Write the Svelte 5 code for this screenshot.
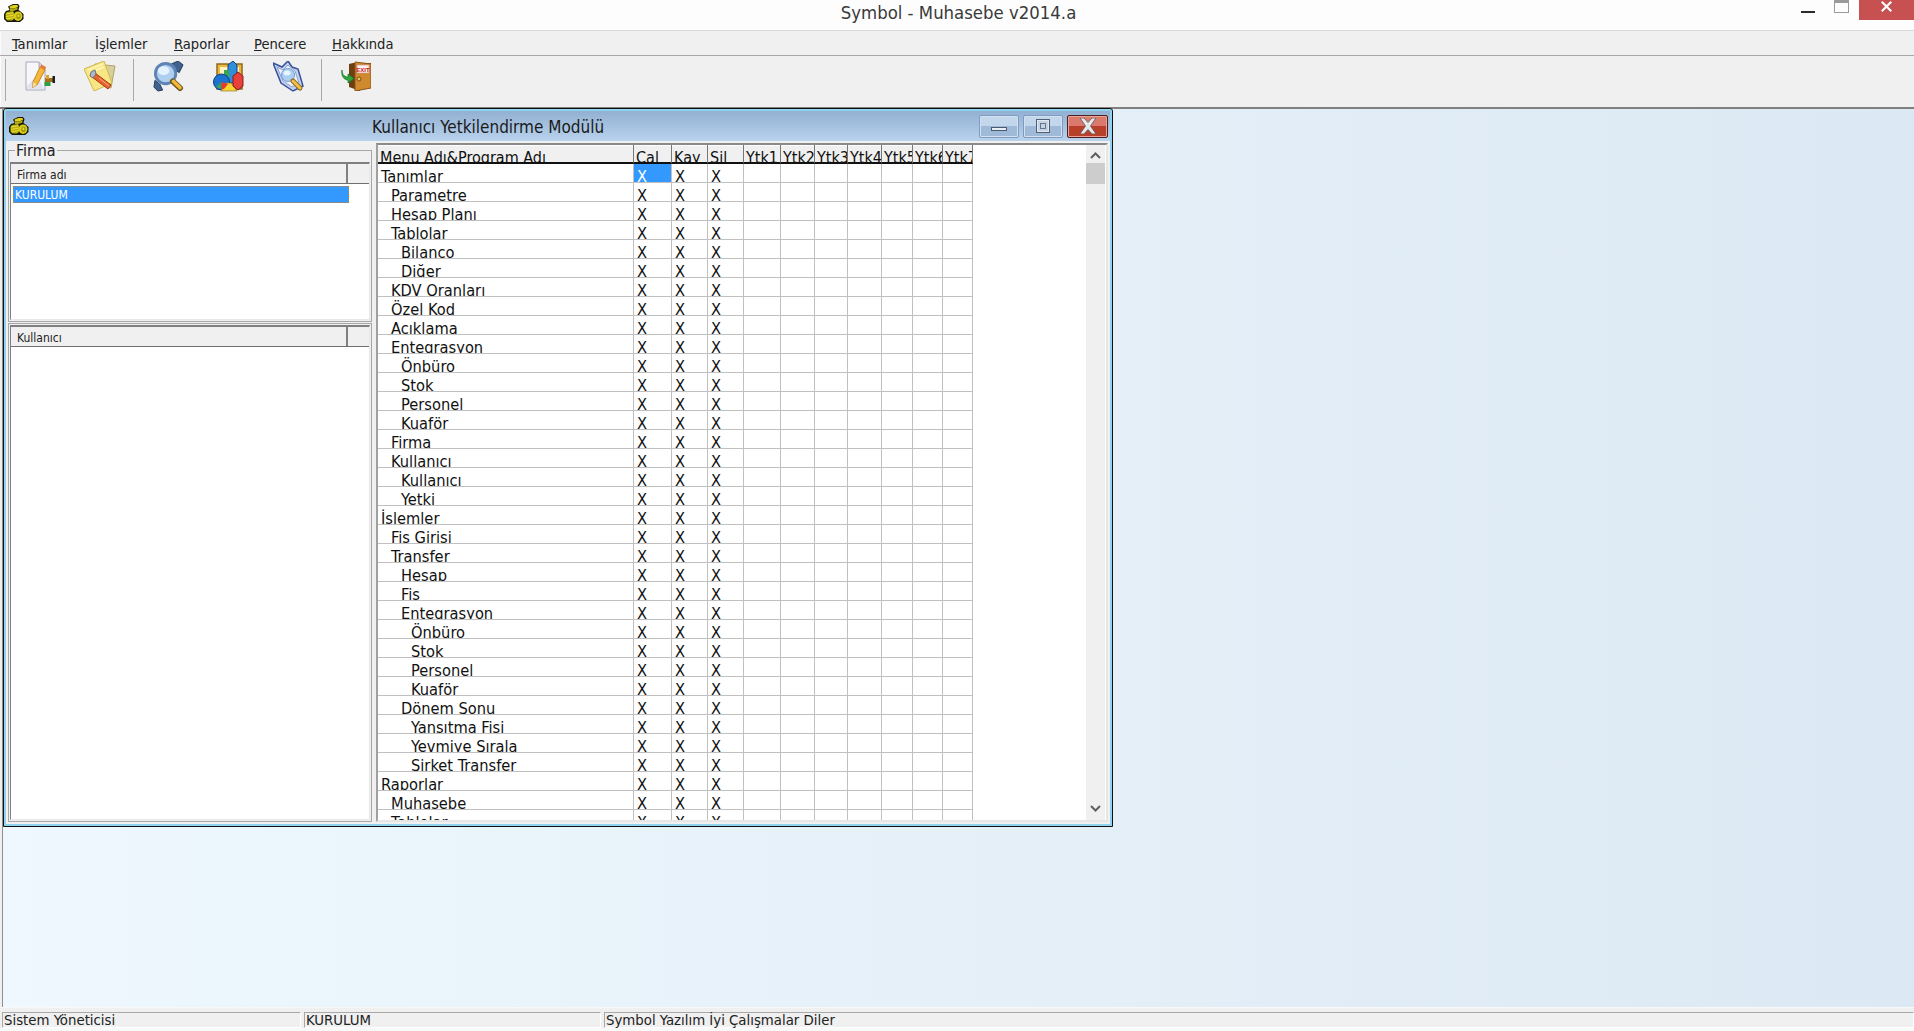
<script>
  const menus = [
    { pre: '', key: 'T', post: 'anımlar' },
    { pre: 'İ', key: 'ş', post: 'lemler' },
    { pre: '', key: 'R', post: 'aporlar' },
    { pre: '', key: 'P', post: 'encere' },
    { pre: '', key: 'H', post: 'akkında' }
  ];

  const columns = ['Çal', 'Kay', 'Sil', 'Ytk1', 'Ytk2', 'Ytk3', 'Ytk4', 'Ytk5', 'Ytk6', 'Ytk7'];
  const widths = [38, 36, 36, 37, 34, 33, 34, 31, 30, 30];

  const rows = [
    ['Tanımlar', 0], ['Parametre', 1], ['Hesap Planı', 1], ['Tablolar', 1], ['Bilanço', 2], ['Diğer', 2],
    ['KDV Oranları', 1], ['Özel Kod', 1], ['Açıklama', 1], ['Entegrasyon', 1], ['Önbüro', 2], ['Stok', 2],
    ['Personel', 2], ['Kuaför', 2], ['Firma', 1], ['Kullanıcı', 1], ['Kullanıcı', 2], ['Yetki', 2],
    ['İşlemler', 0], ['Fiş Girişi', 1], ['Transfer', 1], ['Hesap', 2], ['Fiş', 2], ['Entegrasyon', 2],
    ['Önbüro', 3], ['Stok', 3], ['Personel', 3], ['Kuaför', 3], ['Dönem Sonu', 2], ['Yansıtma Fişi', 3],
    ['Yevmiye Sırala', 3], ['Şirket Transfer', 3], ['Raporlar', 0], ['Muhasebe', 1], ['Tablolar', 1]
  ];
</script>

{#snippet coins()}
  <svg class="coins" viewBox="0 0 20 18" width="20" height="18">
    <path d="M4 2.5 L9 0 H14 L15.5 2 L14.5 6 L16 7 L19.5 10 L19.5 15 L16 18 H3 L0 15 V10 L2 7 L5.5 6Z" fill="#17170a" />
    <path d="M5.5 2.5 L9.5 1 H13.5 L14 3 L10 4.5 H6Z" fill="#e0d21a" />
    <path d="M5.5 4.5 H10 L13.5 3.5 L13.5 5.5 L9.5 7 H6Z" fill="#b0a812" />
    <path d="M1.5 10 L3 8 L9 7 L10 9 L10 15 L8 16.5 H3.5 L1.5 14.5Z" fill="#b8b016" />
    <path d="M2 10 L9 8.8 M2 12.5 L9.5 11.2 M2.5 14.8 L9.5 13.6" stroke="#ebe02c" stroke-width="1" />
    <ellipse cx="14" cy="12.2" rx="4.4" ry="4.8" fill="#d8cc18" />
    <ellipse cx="14.4" cy="12.2" rx="2.2" ry="2.8" fill="#a09810" />
    <ellipse cx="14.4" cy="11.8" rx="1" ry="1.4" fill="#e8de30" />
  </svg>
{/snippet}

<div class="app">
  <header class="titlebar">
    <div class="title-left">{@render coins()}</div>
    <div class="app-title">Symbol - Muhasebe v2014.a</div>
    <div class="caption">
      <span class="cap-min"></span>
      <span class="cap-max"></span>
      <span class="cap-close">
        <svg viewBox="0 0 11 11" width="11" height="11"><path d="M1.5 0 L5.5 4 L9.5 0 L11 1.5 L7 5.5 L11 9.5 L9.5 11 L5.5 7 L1.5 11 L0 9.5 L4 5.5 L0 1.5Z" fill="#fff" /></svg>
      </span>
    </div>
  </header>

  <nav class="menubar">
    {#each menus as m}
      <span class="menu-item">{m.pre}<u>{m.key}</u>{m.post}</span>
    {/each}
  </nav>

  <div class="toolbar">
    <span class="sep first"></span>
    <button class="tool" aria-label="Yeni">
      <svg viewBox="0 0 30 30" width="30" height="30">
        <path d="M1 1 H14 L20 7 V29 H1Z" fill="#f6f6fb" stroke="#a6a8bc" />
        <path d="M14 1 V7 H20" fill="#cfd2e2" stroke="#a6a8bc" />
        <path d="M2 25 L12 14 L19 28 H2Z" fill="#e2e3ee" />
        <path d="M8 21 L15 6 L20 9 L12 24 L7.5 26.5Z" fill="#f5b83a" stroke="#c48a20" />
        <path d="M15 6 L16.5 3.5 L21 6 L20 9Z" fill="#e87a3a" />
        <path d="M7.5 26.5 L8 21 L12 24Z" fill="#f4dcb0" />
        <rect x="20" y="17" width="8" height="4" fill="#a8701c" />
        <rect x="21" y="14" width="3" height="4" fill="#e0a030" />
        <rect x="27.5" y="15" width="2.5" height="7" fill="#1d1d1d" />
        <rect x="19.5" y="21" width="6" height="4" fill="#2f9e44" />
      </svg>
    </button>
    <button class="tool" aria-label="Ayarlar">
      <svg viewBox="0 0 32 30" width="32" height="30">
        <path d="M11 3 L31 5 L27 27 L10 23Z" fill="#d8cf9c" stroke="#b0a468" />
        <path d="M0 8 L20 0 L28 22 L10 30Z" fill="#f8e684" stroke="#cdb84a" />
        <path d="M4 9 L19 3 M5 12 L20 6" stroke="#fff6bc" stroke-width="1.4" />
        <path d="M11 12 L27 24 L24 28 L8 16Z" fill="#e8622c" stroke="#a83c18" />
        <path d="M6 15 L7 11 L11 9 L12 13 L9 17Z" fill="#b3b8c6" stroke="#6a6f80" />
        <path d="M15 17 L25 25" stroke="#f8ac8a" />
      </svg>
    </button>
    <span class="sep"></span>
    <button class="tool" aria-label="Ara">
      <svg viewBox="0 0 32 32" width="31" height="31">
        <path d="M19 3 L26 0 L31 4 L27 12 L23 9Z" fill="#40628e" stroke="#20385c" />
        <path d="M2 20 L7 24 L10 30 L5 31 L1 27Z" fill="#40628e" stroke="#20385c" />
        <circle cx="13" cy="13" r="10.5" fill="#aecff0" stroke="#5f83b5" stroke-width="3" />
        <ellipse cx="11" cy="10" rx="6" ry="4.5" fill="#e4f2fd" />
        <path d="M20.5 21 L28 28" stroke="#6f5a22" stroke-width="6" stroke-linecap="round" />
        <path d="M21 21 L28 27.5" stroke="#f4b93b" stroke-width="3.5" stroke-linecap="round" />
      </svg>
    </button>
    <button class="tool" aria-label="Grafik">
      <svg viewBox="0 0 31 31" width="31" height="31">
        <rect x="4" y="3" width="25" height="25" fill="#f2b83c" stroke="#8c6a1e" stroke-width="1.5" />
        <rect x="7" y="6" width="19" height="18" fill="#fff4c4" />
        <path d="M15 4 L20 0 L24 4 V22 H15Z" fill="#2f8fdc" stroke="#123c80" />
        <path d="M11 9 H16 V22 H11Z" fill="#38a84a" />
        <circle cx="8.5" cy="21" r="8" fill="#1c74d0" stroke="#123c80" />
        <path d="M8 30 L13 22 H18 L24 30Z" fill="#f6d52e" stroke="#8c6a1e" stroke-width=".6" />
        <path d="M8.5 21 V28 L3 26Z" fill="#38a84a" />
        <path d="M8.5 21 L15 23 L11 28 H8.5Z" fill="#e83a30" />
        <path d="M20 15 L25 11 L30 15 V25 L25 29 L20 25Z" fill="#e8403a" stroke="#8c1a14" />
      </svg>
    </button>
    <button class="tool" aria-label="Rapor">
      <svg viewBox="0 0 31 31" width="31" height="31">
        <path d="M0 2 L9 6 L15 0 L19 6 L25 8 L30 25 L20 30 L8 22Z" fill="#c5d2ee" stroke="#33519c" stroke-width="1.5" />
        <path d="M4 6 L10 9 L15 4 L22 10 L26 22 L19 26 L10 20Z" fill="#eef1fb" stroke="#8ea0d0" />
        <circle cx="15" cy="14" r="6.5" fill="#a8d0f2" stroke="#7a9ccf" />
        <ellipse cx="14" cy="12" rx="3.5" ry="2.5" fill="#e9f5fe" />
        <path d="M20 20 L27 27" stroke="#8a6a1a" stroke-width="5" stroke-linecap="round" />
        <path d="M20 20 L27 27" stroke="#f2c04a" stroke-width="3" stroke-linecap="round" />
      </svg>
    </button>
    <span class="sep"></span>
    <button class="tool" aria-label="Çıkış">
      <svg viewBox="0 0 30 30" width="30" height="30">
        <path d="M8 3 L12 2 H30 V27 H19 V30 L8 26Z" fill="#6e3f10" />
        <path d="M14 1 L30 3 V27 L14 30Z" fill="#cf8a2e" stroke="#8c5416" />
        <rect x="16" y="4" width="12" height="8" fill="#f8f2f2" stroke="#c88" stroke-width=".6" />
        <text x="22" y="10.5" class="exit">EXIT</text>
        <circle cx="18" cy="18" r="2" fill="#e6c46a" stroke="#7c4a12" />
        <path d="M1 9 C1 14 4 16 7 16 V13 L13 17.5 L7 22 V19 C3 19 0 15 1 9Z" fill="#2fa83c" stroke="#17702a" stroke-width=".7" />
      </svg>
    </button>
  </div>

  <main class="mdi">
    <section class="window">
      <div class="win-title">
        {@render coins()}
        <span class="win-text">Kullanıcı Yetkilendirme Modülü</span>
        <div class="win-buttons">
          <span class="wbtn"><i class="glyph-min"></i></span>
          <span class="wbtn"><i class="glyph-max"></i></span>
          <span class="wbtn close">
            <svg viewBox="0 0 18 16" width="18" height="16"><path d="M1 0 H5 L9 4.5 L13 0 H17 L11.5 8 L17 16 H13 L9 11.5 L5 16 H1 L6.5 8Z" fill="#e8e8ec" stroke="#555" stroke-width=".8" /></svg>
          </span>
        </div>
      </div>
      <div class="win-body">
        <div class="left">
          <fieldset class="group">
            <legend>Firma</legend>
            <div class="list">
              <div class="list-head"><span class="head-main">Firma adı</span><span class="head-rest"></span></div>
              <div class="selected">KURULUM</div>
            </div>
          </fieldset>
          <div class="group users">
            <div class="list">
              <div class="list-head"><span class="head-main">Kullanıcı</span><span class="head-rest"></span></div>
            </div>
          </div>
        </div>

        <div class="grid-frame">
          <div class="grid">
            <div class="grid-head">
              <span class="hcell name">Menu Adı&amp;Program Adı</span>
              {#each columns as c, i}
                <span class="hcell" style="width:{widths[i]}px">{c}</span>
              {/each}
            </div>
            {#each rows as r, y}
              <div class="row">
                <span class="cell name" style="padding-left:{3 + r[1] * 10}px">{r[0]}</span>
                {#each columns as c, i}
                  <span class="cell" class:active={y === 0 && i === 0} style="width:{widths[i]}px">{i < 3 ? 'X' : ''}</span>
                {/each}
              </div>
            {/each}
          </div>
          <div class="scrollbar">
            <svg viewBox="0 0 11 7" width="11" height="7"><path d="M1 6 L5.5 1.5 L10 6" fill="none" stroke="#606060" stroke-width="2" /></svg>
            <div class="thumb"></div>
            <svg class="down" viewBox="0 0 11 7" width="11" height="7"><path d="M1 1 L5.5 5.5 L10 1" fill="none" stroke="#606060" stroke-width="2" /></svg>
          </div>
        </div>
      </div>
    </section>
  </main>

  <footer class="status">
    <span class="panel p1">Sistem Yöneticisi</span>
    <span class="panel p2">KURULUM</span>
    <span class="panel p3">Symbol Yazılım İyi Çalışmalar Diler</span>
  </footer>
</div>

<style>
  :global(body) {
    margin: 0;
    background: #f0f0f0;
    overflow: hidden;
  }
  .app {
    height: 1031px;
    display: flex;
    flex-direction: column;
    font-family: "DejaVu Sans Condensed", "DejaVu Sans", sans-serif;
    color: #111;
  }
  .titlebar {
    height: 30px;
    flex: none;
    display: grid;
    grid-template-columns: 1fr auto 1fr;
    background: #fdfdfd;
    border-bottom: 1px solid #d8d8d8;
  }
  .title-left {
    padding: 4px 0 0 4px;
  }
  .coins {
    display: block;
  }
  .exit {
    font-size: 6px;
    font-weight: bold;
    fill: #d01818;
    text-anchor: middle;
  }
  .app-title {
    padding-left: 3px;
    font-size: 18.4px;
    line-height: 26px;
    color: #3a3a3a;
  }
  .caption {
    display: flex;
    justify-content: flex-end;
    align-items: flex-start;
  }
  .cap-min {
    width: 14px;
    height: 2px;
    margin-top: 11px;
    background: #2b2b2b;
  }
  .cap-max {
    box-sizing: border-box;
    width: 15px;
    height: 13px;
    margin-left: 19px;
    border: 1px solid #9a9a9a;
    border-top-width: 3px;
  }
  .cap-close {
    width: 55px;
    height: 20px;
    margin-left: 10px;
    background: #c75050;
    display: flex;
    justify-content: center;
    padding-top: 1px;
    box-sizing: border-box;
  }
  .menubar {
    height: 25px;
    flex: none;
    box-sizing: border-box;
    display: flex;
    padding-left: 12px;
    background: #f0f0f0;
    border-bottom: 1px solid #a8a8a8;
    box-shadow: inset 1px 0 #fbfbfb;
    font-size: 14.6px;
    line-height: 26px;
    color: #222;
  }
  .menu-item {
    width: 80px;
    white-space: nowrap;
  }
  .menu-item:nth-child(1) { width: 83px; }
  .menu-item:nth-child(2) { width: 79px; }
  .menu-item:nth-child(4) { width: 78px; }
  .toolbar {
    height: 53px;
    flex: none;
    box-sizing: border-box;
    display: flex;
    align-items: flex-start;
    padding-left: 5px;
    background: #f0f0f0;
    border-bottom: 2px solid #808080;
    box-shadow: inset 1px 0 #fbfbfb;
  }
  .sep {
    width: 1px;
    height: 42px;
    margin: 3px 4px 0 3px;
    background: #a8a8a8;
  }
  .sep.first {
    margin-left: 0;
  }
  .tool {
    width: 60px;
    height: 34px;
    margin-top: 3px;
    padding: 0;
    border: 0;
    background: none;
    display: flex;
    justify-content: center;
    align-items: center;
  }
  .mdi {
    flex: 1;
    min-height: 0;
    box-sizing: border-box;
    padding-left: 3px;
    background: linear-gradient(90deg, #f0f0f0 0 2px, #8e8e8e 2px 3px, #eef8fe 3px, #dce8f3 100%);
  }
  .window {
    box-sizing: border-box;
    width: 1110px;
    height: 719px;
    margin-top: -1px;
    display: flex;
    flex-direction: column;
    background: #f0f0f0;
    border: 1px solid #111;
    border-radius: 3px 3px 0 0;
    box-shadow: inset 0 0 0 2px #8fd3ee;
  }
  .win-title {
    height: 30px;
    flex: none;
    margin: 2px 2px 0;
    padding-left: 3px;
    display: flex;
    align-items: center;
    background: linear-gradient(180deg, #92b0d2, #b9d3ed);
  }
  .win-text {
    margin-left: 343px;
    padding-top: 2px;
    font-size: 17px;
    color: #1a1a1a;
  }
  .win-buttons {
    display: flex;
    margin-left: auto;
    margin-right: 2px;
    gap: 4px;
  }
  .wbtn {
    box-sizing: border-box;
    width: 40px;
    height: 23px;
    display: flex;
    justify-content: center;
    align-items: center;
    border: 1px solid #7f9cc0;
    border-radius: 2px;
    background: linear-gradient(180deg, #c2d6ec 0 50%, #9fb9d8 50%);
    box-shadow: inset 0 0 0 1px #d2e0f0;
  }
  .wbtn.close {
    width: 41px;
    border-color: #4a2020;
    background: linear-gradient(180deg, #db7a6c 0 50%, #b8402a 50%);
    box-shadow: inset 0 0 0 1px #e8a49a;
  }
  .glyph-min {
    width: 16px;
    height: 4px;
    background: #e8eef6;
    border: 1px solid #4a5a70;
    box-sizing: border-box;
    margin-top: 5px;
  }
  .glyph-max {
    box-sizing: border-box;
    width: 14px;
    height: 14px;
    border: 1px solid #555f70;
    background: #c4d4e8;
    box-shadow: inset 0 0 0 1px #e4e8f0, inset 0 0 0 3px #c4d4e8, inset 0 0 0 4px #6a7486;
  }
  .win-body {
    flex: 1;
    min-height: 0;
    margin: 0 2px 2px;
    padding: 2px;
    display: flex;
    gap: 4px;
    box-sizing: border-box;
  }
  .left {
    width: 364px;
    flex: none;
    display: flex;
    flex-direction: column;
    gap: 1px;
  }
  .group {
    box-sizing: border-box;
    margin: 0;
    padding: 0 1px 1px;
    border: 1px solid #a6a6a6;
    min-width: 0;
    background: #f0f0f0;
  }
  fieldset.group {
    height: 180px;
    flex: none;
    margin-top: -1px;
  }
  legend {
    margin-left: 5px;
    padding: 2px 1px 0;
    font-size: 16px;
    line-height: 14px;
    color: #222;
  }
  fieldset .list {
    margin-top: 4px;
    height: 158px;
  }
  .users {
    flex: 1;
    min-height: 0;
    padding-top: 1px;
  }
  .users .list {
    height: 100%;
  }
  .list {
    box-sizing: border-box;
    background: #fff;
    border-top: 2px solid #7f7f7f;
    border-left: 1px solid #7f7f7f;
    border-right: 1px solid #e8e8e8;
    border-bottom: 1px solid #e8e8e8;
    font-size: 12px;
  }
  .list-head {
    box-sizing: border-box;
    height: 20px;
    display: flex;
    background: #f0f0f0;
    border-bottom: 1px solid #707070;
    line-height: 22px;
    color: #222;
  }
  .head-main {
    width: 337px;
    box-sizing: border-box;
    padding-left: 6px;
    border-right: 2px solid #808080;
  }
  .head-rest {
    flex: 1;
  }
  .selected {
    box-sizing: border-box;
    width: 336px;
    height: 17px;
    margin: 2px 0 0 2px;
    padding-left: 1px;
    background: #3399ff;
    border: 1px dotted #d08020;
    color: #fff;
    line-height: 16px;
  }
  .grid-frame {
    flex: 1;
    min-width: 0;
    box-sizing: border-box;
    display: flex;
    background: #fff;
    border-top: 2px solid #8a8a8a;
    border-left: 2px solid #a0a0a0;
    border-right: 2px solid #e6e6e6;
    border-bottom: 2px solid #e6e6e6;
  }
  .grid {
    flex: 1;
    min-width: 0;
    overflow: hidden;
    font-size: 16.3px;
    color: #111;
  }
  .grid-head {
    display: flex;
    height: 19px;
    background: #fff;
  }
  .hcell {
    box-sizing: border-box;
    flex: none;
    height: 19px;
    padding: 3px 0 0 2px;
    line-height: 19px;
    font-size: 16px;
    overflow: hidden;
    white-space: nowrap;
    background: #f0f0f0;
    border-right: 1px solid #777;
    border-bottom: 2px solid #111;
    box-shadow: inset 0 1px 0 #fff;
  }
  .name {
    width: 256px;
    flex: none;
  }
  .row {
    display: flex;
    height: 19px;
  }
  .cell {
    box-sizing: border-box;
    flex: none;
    height: 19px;
    padding: 3px 0 0 3px;
    line-height: 19px;
    white-space: nowrap;
    overflow: hidden;
    border-right: 1px solid #c0c0c0;
    border-bottom: 1px solid #c0c0c0;
  }
  .cell.active {
    background: #3399ff;
    color: #fff;
  }
  .scrollbar {
    width: 19px;
    flex: none;
    margin-right: 1px;
    display: flex;
    flex-direction: column;
    align-items: center;
    background: #f0f0f0;
    padding-top: 7px;
    box-sizing: border-box;
  }
  .thumb {
    align-self: stretch;
    height: 21px;
    margin-top: 4px;
    background: #cdcdcd;
  }
  .down {
    margin-top: auto;
    margin-bottom: 8px;
  }
  .status {
    height: 24px;
    flex: none;
    box-sizing: border-box;
    display: flex;
    gap: 3px;
    padding: 4px 0 0 2px;
    background: #f0f0f0;
    border-top: 1px solid #f8f8f8;
    border-bottom: 3px solid #fafafa;
    font-size: 14.8px;
    line-height: 14px;
    color: #222;
  }
  .panel {
    box-sizing: border-box;
    padding-left: 1px;
    border: 1px solid;
    border-color: #a8a8a8 #fff #fff #a8a8a8;
    white-space: nowrap;
  }
  .p1 { width: 299px; }
  .p2 { width: 297px; }
  .p3 { flex: 1; }
</style>
